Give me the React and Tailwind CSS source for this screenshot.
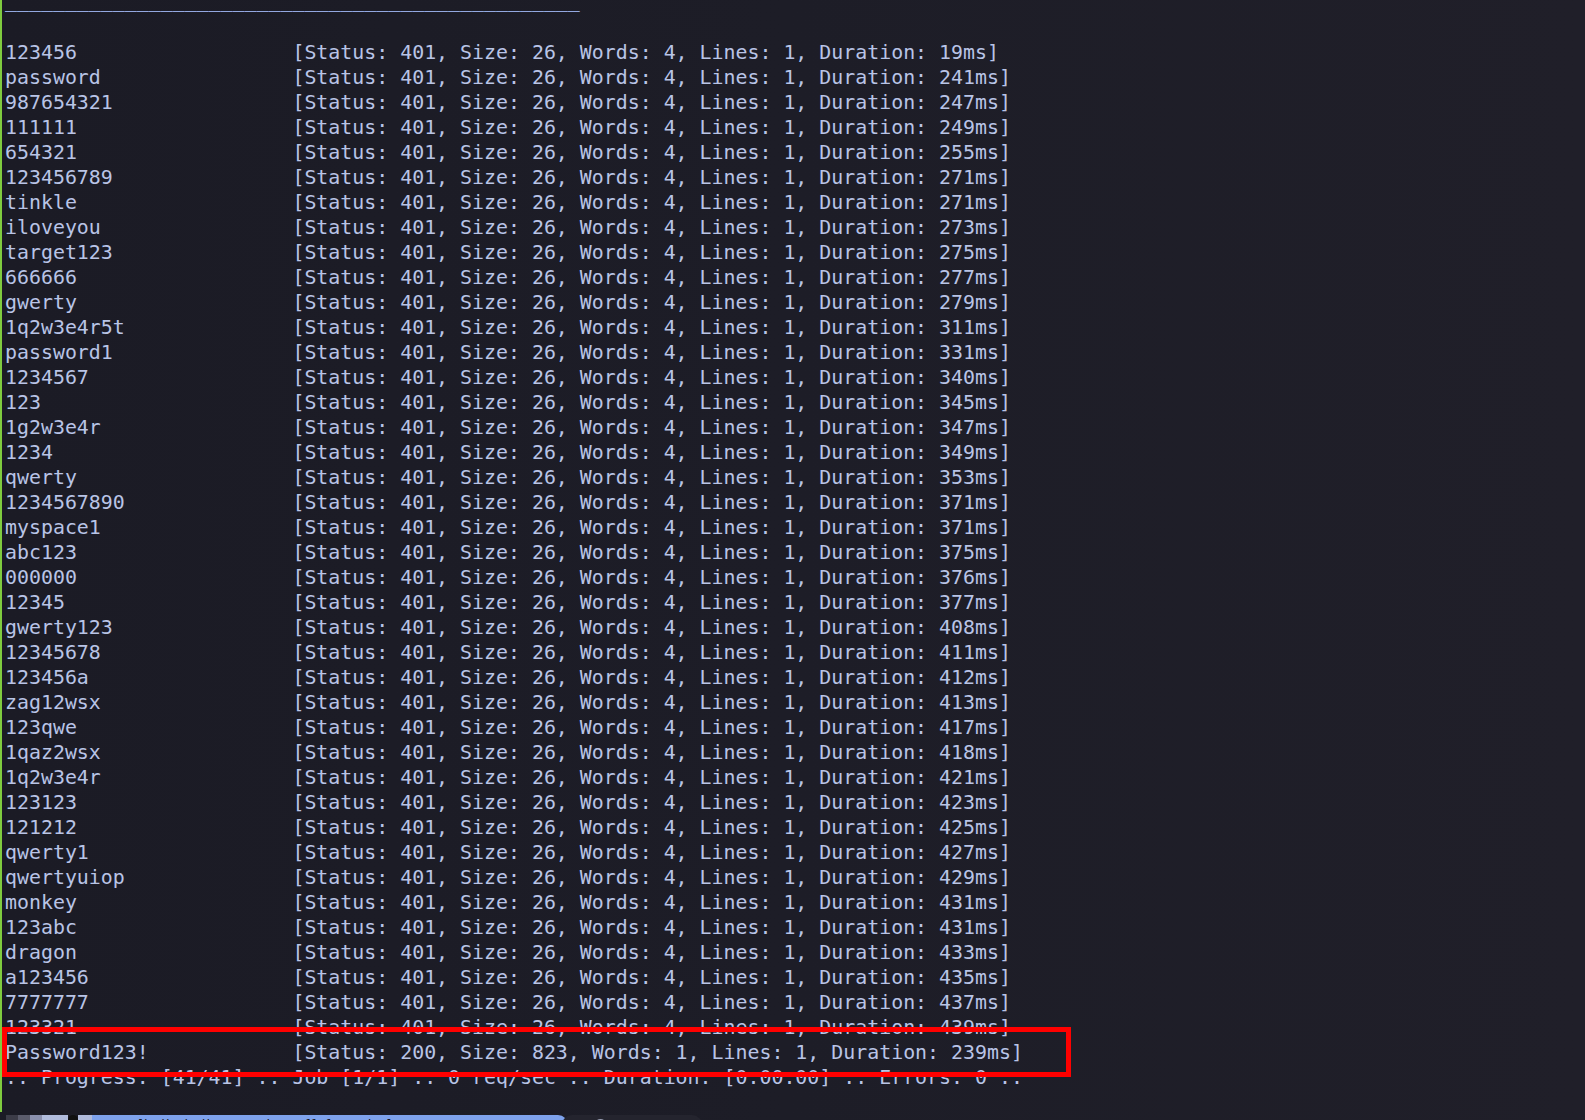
const words = [
  "123456", "password", "987654321", "111111", "654321", "123456789", "tinkle",
  "iloveyou", "target123", "666666", "gwerty", "1q2w3e4r5t", "password1",
  "1234567", "123", "1g2w3e4r", "1234", "qwerty", "1234567890", "myspace1",
  "abc123", "000000", "12345", "gwerty123", "12345678", "123456a", "zag12wsx",
  "123qwe", "1qaz2wsx", "1q2w3e4r", "123123", "121212", "qwerty1",
  "qwertyuiop", "monkey", "123abc", "dragon", "a123456", "7777777", "123321",
];

const durations = [
  19, 241, 247, 249, 255, 271, 271, 273, 275, 277, 279, 311, 331, 340, 345,
  347, 349, 353, 371, 371, 375, 376, 377, 408, 411, 412, 413, 417, 418, 421,
  423, 425, 427, 429, 431, 431, 433, 435, 437, 439,
];

const line = (w, status, size, wc, lines, ms) =>
  `${w.padEnd(23)} [Status: ${status}, Size: ${size}, Words: ${wc}, Lines: ${lines}, Duration: ${ms}ms]`;

const output = [
  "",
  ...words.map((w, i) => line(w, 401, 26, 4, 1, durations[i])),
  line("Password123!", 200, 823, 1, 1, 239),
  ":: Progress: [41/41] :: Job [1/1] :: 0 req/sec :: Duration: [0:00:00] :: Errors: 0 ::",
];

export default function App() {
  return (
    <div className="relative w-[1585px] h-[1120px] overflow-hidden bg-gradient-to-r from-[#1b1b25] via-[#1d1d27] to-[#201f29]">
      {/* terminal */}
      <div className="h-[1112px] border-l-2 border-[#7fcb3f] overflow-hidden">
        <div className="-mt-[10px] pl-[3px] text-[#b9c4e6] text-[19.9px] leading-[25px] whitespace-pre font-['DejaVu_Sans_Mono',monospace]">
          <div className="h-[25px] relative -top-[2px] text-[#93a8e0]">{"_".repeat(48)}</div>
          {output.map((t, i) => (
            <div key={i} className="h-[25px]">
              {t || " "}
            </div>
          ))}
        </div>
      </div>

      {/* taskbar peeking in at the bottom */}
      <div className="flex items-start h-[20px] mt-[3px] pl-[6px]">
        <div className="w-[12px] h-[20px] bg-[#3c3c48]" />
        <div className="w-[12px] h-[20px] bg-[#5b5c6c]" />
        <div className="w-[12px] h-[20px] bg-[#8a90ae]" />
        <div className="w-[26px] h-[20px] bg-[#b0bbdc]" />
        <div className="w-[10px] h-[20px] rounded-t-full bg-[#111]" />
        <div className="w-[14px] h-[20px] bg-[#b0bbdc]" />
        <div className="w-[476px] h-[20px] rounded-r-[12px] bg-[#7ea2ec] pl-[46px] text-[13px] leading-[20px] text-[#1a1c2a] font-['DejaVu_Sans',sans-serif] tracking-[1px]">
          [kali@kali: ~/Desktop/ffuf-results]
        </div>
        <div className="ml-[-6px] flex items-center gap-[6px] h-[20px] w-[140px] rounded-[10px] bg-[#24242e] pl-[32px]">
          <span className="w-[13px] h-[13px] rounded-full border-2 border-[#9aa0b4]" />
          <span className="text-[13px] text-[#9aa0b4] font-['DejaVu_Sans',sans-serif]">10:22</span>
        </div>
      </div>

      {/* highlight of the hit */}
      <div className="absolute left-[2px] top-[1027px] w-[1069px] h-[50px] border-[5px] border-[#f00]" />
    </div>
  );
}
